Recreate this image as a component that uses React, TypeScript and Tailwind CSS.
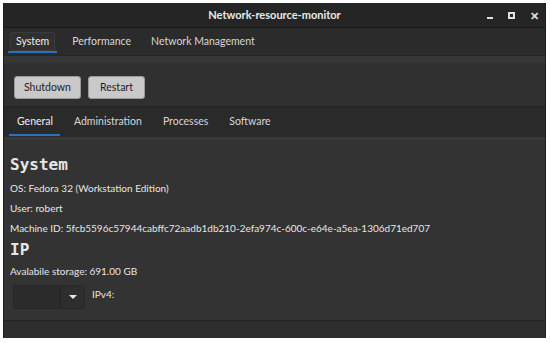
import React from 'react';

const font = { fontFamily: 'Lato, "Noto Sans", sans-serif' };
const mono = { fontFamily: '"DejaVu Sans Mono", monospace' };

function Tab({ label, active }: { label: string; active?: boolean }) {
  return (
    <div className="relative flex h-full items-center">
      <span
        className={
          active
            ? 'rounded-[2px] border border-[#3c3c3c] bg-[#303030] px-[5px] py-[1px] text-[#eeeeee]'
            : 'px-[3px] text-[#d6d6d6]'
        }
      >
        {label}
      </span>
      {active && <div className="absolute bottom-[2px] left-[-2px] right-[-2px] h-[2px] bg-[#2e6fc0]" />}
    </div>
  );
}

function SubTab({ label, active }: { label: string; active?: boolean }) {
  return (
    <div className="relative flex h-full items-center">
      <span className={active ? 'text-[#eeeeee]' : 'text-[#d6d6d6]'}>{label}</span>
      {active && <div className="absolute bottom-[1px] left-[-8px] right-[-7px] h-[2px] bg-[#2e6fc0]" />}
    </div>
  );
}

export default function App() {
  return (
    <div className="h-[343px] w-[550px] bg-white pb-[5px] pl-[3px] pr-[4px] pt-[3px] text-[10px]" style={font}>
      <div className="flex h-full flex-col border-x border-[#1e1e1e] bg-[#303030]">
        {/* title bar */}
        <div className="relative flex h-[24px] shrink-0 items-center justify-center bg-[#252525]">
          <span className="text-[11px] font-bold text-[#e8e8e8]">Network-resource-monitor</span>
          <div className="absolute right-[6px] top-0 flex h-full items-center gap-[15px] text-[#e0e0e0]">
            <div className="mt-[6px] h-[2px] w-[6px] bg-[#e0e0e0]" />
            <div className="h-[7px] w-[7px] border-[2px] border-[#e0e0e0]" />
            <span className="text-[11px] font-bold leading-none">✕</span>
          </div>
        </div>

        {/* main tabs */}
        <div className="flex h-[28px] shrink-0 items-stretch gap-[14px] border-t border-[#1a1a1a] bg-[#2b2b2b] pl-[6px] text-[10.5px]">
          <Tab label="System" active />
          <Tab label="Performance" />
          <Tab label="Network Management" />
        </div>
        <div className="h-[8px] shrink-0 border-t border-[#262626] bg-[#373737]" />

        {/* toolbar */}
        <div className="flex h-[43px] shrink-0 items-start gap-[7px] bg-[#303030] pl-[10px] pt-[13px]">
          <button className="h-[23px] w-[67px] rounded-[3px] border border-[#9a9a9a] bg-[#c9c9c9] text-[10.5px] text-[#1e1e1e]">
            Shutdown
          </button>
          <button className="h-[23px] w-[57px] rounded-[3px] border border-[#9a9a9a] bg-[#c9c9c9] text-[10.5px] text-[#1e1e1e]">
            Restart
          </button>
        </div>

        {/* sub tabs */}
        <div className="flex h-[31px] shrink-0 items-stretch gap-[21px] border-t border-[#242424] bg-[#2a2a2a] pl-[13px] text-[10.5px]">
          <SubTab label="General" active />
          <SubTab label="Administration" />
          <SubTab label="Processes" />
          <SubTab label="Software" />
        </div>
        <div className="h-[3px] shrink-0 bg-[#3a3a3a]" />

        {/* content */}
        <div className="flex flex-1 flex-col border-b border-[#232323] bg-[#333333] px-[6px] pt-[15px] text-[#e6e6e6]">
          <div className="text-[16px] font-bold leading-[20px]" style={mono}>
            System
          </div>
          <div className="mt-[3px] leading-[20px]">OS: Fedora 32 (Workstation Edition)</div>
          <div className="leading-[20px]">User: robert</div>
          <div className="leading-[20px]">Machine ID: 5fcb5596c57944cabffc72aadb1db210-2efa974c-600c-e64e-a5ea-1306d71ed707</div>
          <div className="mt-[1px] text-[16px] font-bold leading-[22px]" style={mono}>
            IP
          </div>
          <div className="leading-[21px]">Avalabile storage: 691.00 GB</div>
          <div className="mt-[3px] flex items-start gap-[7px] pl-[3px]">
            <div className="flex h-[24px] w-[72px] overflow-hidden rounded-[3px] border border-[#262626] bg-[#2b2b2b]">
              <div className="flex-1" />
              <div className="flex w-[24px] items-center justify-center border-l border-[#232323] bg-[#2e2e2e]">
                <svg width="8" height="5" viewBox="0 0 8 5">
                  <path d="M0 0 L8 0 L4 4 Z" fill="#e6e6e6" />
                </svg>
              </div>
            </div>
            <div className="mt-[2px]">IPv4:</div>
          </div>
        </div>
        <div className="h-[17px] shrink-0 bg-[#2e2e2e]" />
      </div>
    </div>
  );
}
